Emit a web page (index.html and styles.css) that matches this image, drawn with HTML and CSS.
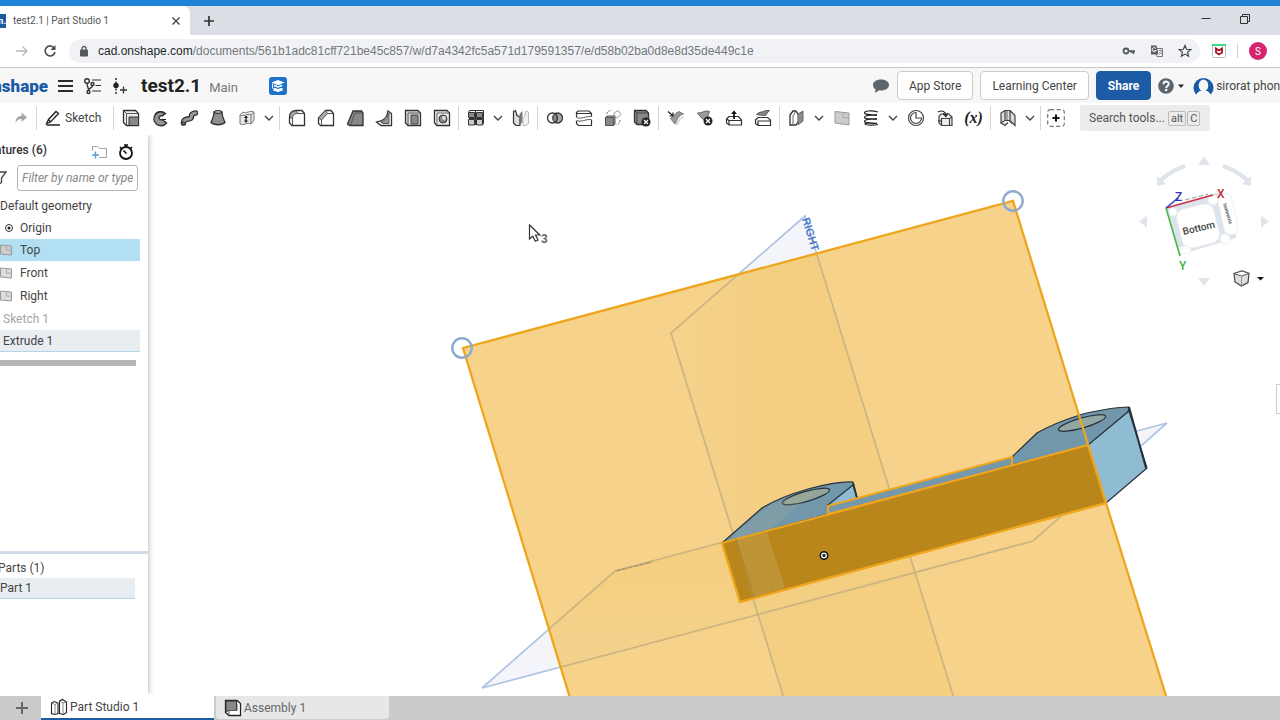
FILE: index.html
```html
<!DOCTYPE html>
<html lang="en">
<head>
<meta charset="utf-8">
<title>test2.1 | Part Studio 1</title>
<link rel="stylesheet" href="styles.css">
</head>
<body>
<div class="app">
  <div class="tabstrip">
    <div class="tab">
      <span class="favicon">n.</span>
      <span class="tab-title">test2.1 | Part Studio 1</span>
      <button class="plain" aria-label="Close tab"><svg width="10" height="10" viewBox="0 0 10 10"><path d="M1.5 1.5l7 7M8.500 1.500l-7 7" stroke="#444" stroke-width="1.400"/></svg></button>
    </div>
    <button class="plain newtab" aria-label="New tab"><svg width="12" height="12" viewBox="0 0 12 12"><path d="M6 1v10M1 6h10" stroke="#333" stroke-width="1.700"/></svg></button>
    <div class="window-controls">
      <button class="plain" aria-label="Minimize"><svg width="12" height="12" viewBox="0 0 12 12"><path d="M1.500 5.500h9" stroke="#333"/></svg></button>
      <button class="plain" aria-label="Restore"><svg width="12" height="12" viewBox="0 0 12 12"><path d="M1.500 3.500h7v7h-7zM3.500 3.500v-2h7v7h-2" fill="none" stroke="#333"/></svg></button>
    </div>
  </div>

  <div class="urlrow">
    <button class="plain" aria-label="Forward"><svg width="14" height="12" viewBox="0 0 14 12"><path d="M1 6h11M7.500 1.500L12 6l-4.500 4.500" fill="none" stroke="#b4b6b9" stroke-width="1.300"/></svg></button>
    <button class="plain" aria-label="Reload"><svg width="14" height="14" viewBox="0 0 14 14"><path d="M11.500 4.500A5 5 0 1 0 12 8" fill="none" stroke="#4a4c50" stroke-width="1.600"/><path d="M12.500 1v5h-5z" fill="#4a4c50"/></svg></button>
    <div class="omnibox">
      <svg width="10" height="12" viewBox="0 0 10 12"><rect x="1" y="4.500" width="8" height="7" rx="1" fill="#55585c"/><path d="M3 5V3.500a2 2 0 0 1 4 0V5" fill="none" stroke="#55585c" stroke-width="1.300"/></svg>
      <span class="url"><b>cad.onshape.com</b>/documents/561b1adc81cff721be45c857/w/d7a4342fc5a571d179591357/e/d58b02ba0d8e8d35de449c1e</span>
      <span class="url-icons">
        <svg width="14" height="14" viewBox="0 0 14 14"><circle cx="4" cy="7" r="2.500" fill="none" stroke="#55585c" stroke-width="1.800"/><path d="M6.500 7H13M11.500 7v3M9.500 7v2" stroke="#55585c" stroke-width="1.700"/></svg>
        <svg width="14" height="14" viewBox="0 0 14 14"><path d="M5.500 4.500h7v8H7z" fill="#fff" stroke="#777"/><path d="M1 1.500h5.500l2 9H1z" fill="#5b5e62"/><path d="M5.800 4.500a2 2 0 1 0 .2 2H4.300" fill="none" stroke="#fff"/><path d="M8.500 6.500h4M10.500 5.500v1M12 6.500c-.5 2-1.500 3-3 4M9.300 7.500c.5 1.500 1.500 2.500 3 3.200" fill="none" stroke="#777" stroke-width=".8"/></svg>
        <svg width="14" height="14" viewBox="0 0 14 14"><path d="M7 1.500l1.600 3.800 4.100.3-3.100 2.700 1 4L7 10.100l-3.600 2.200 1-4L1.300 5.600l4.100-.3z" fill="none" stroke="#44474b" stroke-width="1.200"/></svg>
      </span>
    </div>
    <svg class="shield" width="14" height="14" viewBox="0 0 14 14"><rect x=".5" y=".5" width="13" height="13" rx="1" fill="#fff" stroke="#b9bdb9"/><path d="M0 0h14v2H0z" fill="#3ddc84"/><path d="M4 4.500v4L7 10.500l3-2v-4L7 6.500z" fill="none" stroke="#a3151f" stroke-width="1.800"/></svg>
    <span class="divider"></span>
    <button class="avatar" aria-label="Profile">S</button>
  </div>

  <header class="dochead">
    <div class="logo"><span>onshape</span></div>
    <button class="plain" aria-label="Menu"><svg width="16" height="14" viewBox="0 0 16 14"><path d="M0 2h15M0 7h15M0 12h15" stroke="#2b2d2f" stroke-width="2.200"/></svg></button>
    <button class="plain" aria-label="Versions"><svg width="20" height="18" viewBox="0 0 20 18"><g fill="none" stroke="#333" stroke-width="1.400"><circle cx="4" cy="4" r="2.300"/><circle cx="9.500" cy="7" r="1.500"/><circle cx="5.500" cy="15" r="1.500"/><path d="M4 6.300c0 3.500 1.500 4 1.500 7M9.500 8.500c0 2.500-3.500 2.500-4 4.500"/><path d="M9 3h9M12.500 8.500H18M9 14h9" stroke-width="1.200"/></g></svg></button>
    <button class="plain" aria-label="Create version"><svg width="16" height="18" viewBox="0 0 16 18"><path d="M4 1v16" stroke="#333" stroke-width="1.500" stroke-dasharray="2 1.500"/><circle cx="4" cy="8.500" r="2.700" fill="#222"/><path d="M11.500 9.500v7M8 13h7" stroke="#333" stroke-width="1.300"/></svg></button>
    <h1>test2.1</h1>
    <span class="branch">Main</span>
    <button class="plain edu" aria-label="Education"><svg width="18" height="18" viewBox="0 0 18 18"><rect width="18" height="18" rx="3" fill="#1f72c9"/><path d="M9 3l6.500 2.600L9 8.300 2.500 5.600z" fill="#fff"/><path d="M5 7.600l4 1.700 4-1.700v2.200c-1.600 0-3 .4-4 1.200-1-.8-2.400-1.200-4-1.200zM4.500 11c2 0 3.500.4 4.500 1.300 1-.9 2.500-1.300 4.500-1.300v3c-2 0-3.500.3-4.500 1.200-1-.9-2.500-1.200-4.500-1.200zM3 6.500h1v5H3z" fill="#fff"/></svg></button>
    <div class="head-right">
      <button class="plain" aria-label="Comments"><svg width="18" height="16" viewBox="0 0 18 16"><path d="M9 1.500c4.800 0 8 2.400 8 5.500s-3.200 5.500-8 5.500c-.7 0-1.400 0-2-.2C5.500 14 4 14.700 2.300 14.800c.9-1 1.200-2 1.200-3.400C1.800 10.300 1 8.800 1 7c0-3.100 3.200-5.500 8-5.500z" fill="#5d666e"/></svg></button>
      <button class="btn">App Store</button>
      <button class="btn">Learning Center</button>
      <button class="btn share">Share</button>
      <button class="plain help" aria-label="Help"><svg width="27" height="16" viewBox="0 0 27 16"><circle cx="8" cy="8" r="7.800" fill="#5d666e"/><path d="M5.500 6.300c0-3.700 5.200-3.500 5.200-.4 0 2-2.500 2-2.500 4" fill="none" stroke="#fff" stroke-width="1.900"/><circle cx="8.200" cy="12" r="1.200" fill="#fff"/><path d="M20 6.500h6l-3 3.500z" fill="#222"/></svg></button>
      <button class="plain user"><svg width="21" height="20" viewBox="0 0 21 20"><path d="M3 18.500A10 10 0 1 1 18 18.500L14.500 15h-8z" fill="#175aa6"/><ellipse cx="10.500" cy="9.500" rx="4.800" ry="6" fill="#f7f7f7"/><path d="M3.500 20c.5-3 2.500-4.500 5-5h4c2.500.5 4.500 2 5 5z" fill="#f7f7f7"/></svg>sirorat phon</button>
    </div>
  </header>

  <nav class="toolbar">
    <button class="tool redo" aria-label="Redo"><svg class="i" viewBox="0 0 18 18"><path d="M3.500 14.500c0-5 2-7.500 6-7.500V3.500L15 8.500l-5.500 4.300V10c-3 0-4.500 1-6 4.500z" fill="#a4a4a4"/></svg></button>
    <div class="group">
      <button class="sketch"><svg class="i" viewBox="0 0 18 18"><path d="M2.500 14.500l2-4L12 2.500l2.500 2-8 8.500zM4.500 10.500l2 2.500M2.500 16H16" fill="none" stroke="#222" stroke-width="1.300"/></svg>Sketch</button>
    </div>
    <div class="group">
      <button class="tool" aria-label="Extrude"><svg class="i" viewBox="0 0 18 18"><path d="M1.500 1.500h12l3 3v12h-12l-3-3z" fill="#eee" stroke="#333" stroke-width="1.300"/><path d="M4.500 16V4.500H16M1.500 1.500l3 3" fill="none" stroke="#555"/><path d="M7 8h9.500v8.500H7z" fill="#888" stroke="#333"/></svg></button>
      <button class="tool" aria-label="Revolve"><svg class="i" viewBox="0 0 18 18"><path d="M14.500 4.500A7 7 0 1 0 15.500 14l-4.500-3.500a2 2 0 1 1 0-3.500z" fill="#949494" stroke="#333" stroke-width="1.400"/><path d="M4 5c2-2.500 6-3 9-1M11 7l3.500-2.500M11 10.500h4" fill="none" stroke="#222"/></svg></button>
      <button class="tool" aria-label="Sweep"><svg class="i" viewBox="0 0 18 18"><path d="M3.500 14c.5-7 8.500-1.500 8-7 0-1.500 1-2.500 4-3" fill="none" stroke="#333" stroke-width="5.600" stroke-linecap="round"/><path d="M3.500 14c.5-7 8.500-1.500 8-7 0-1.500 1-2.500 4-3" fill="none" stroke="#999" stroke-width="3" stroke-linecap="round"/><ellipse cx="3.500" cy="14.500" rx="2" ry="1.300" fill="#777" stroke="#222"/></svg></button>
      <button class="tool" aria-label="Loft"><svg class="i" viewBox="0 0 18 18"><path d="M5 3c0 5-1.500 7-3 10.500 3 3 11 3 14 0C14.500 10 13 8 13 3z" fill="#8f8f8f" stroke="#333" stroke-width="1.300"/><ellipse cx="9" cy="3" rx="4" ry="1.400" fill="#bbb" stroke="#222"/></svg></button>
      <button class="tool" aria-label="Thicken"><svg class="i" viewBox="0 0 18 18"><path d="M2 6l3-3c3 2 7-2 11 0v8l-3 4c-4-2-7 2-11 0z" fill="#e6e6e6" stroke="#777"/><path d="M2 6c4 2 7-2 11 0v9M13 6l3-3" fill="none" stroke="#777"/><path d="M8 7v6" stroke="#222" stroke-width="1.300"/><path d="M6 9l2-2.500L10 9zM6 11.500l2 2.500 2-2.500z" fill="#222"/></svg></button>
      <button class="drop" aria-label="More solid tools"><svg class="c" viewBox="0 0 10 10"><path d="M1 3l4 4 4-4"/></svg></button>
    </div>
    <div class="group">
      <button class="tool" aria-label="Fillet"><svg class="i" viewBox="0 0 18 18"><path d="M1.500 14V8c0-4 2.500-6.500 6.500-6.500h6l2.500 3v12H4z" fill="#fff" stroke="#333" stroke-width="1.300"/><path d="M2 8c0-4 2.500-6 6-6l2 2.500c-4 0-5.500 2-5.500 5.500z" fill="#aaa" stroke="#555"/><path d="M4.500 16v-6M10 4.500h6" stroke="#555"/></svg></button>
      <button class="tool" aria-label="Chamfer"><svg class="i" viewBox="0 0 18 18"><path d="M1.500 9l7-7.500H14l2.500 3v12h-13l-2-2z" fill="#fff" stroke="#333" stroke-width="1.300"/><path d="M1.500 9l7-7.500 2 3-6 6.500z" fill="#aaa" stroke="#555"/><path d="M4.500 16v-5M10.500 4.500h6" stroke="#555"/></svg></button>
      <button class="tool" aria-label="Draft"><svg class="i" viewBox="0 0 18 18"><path d="M1.500 15L7 2h8.500l1.500 2v12.500H3.500z" fill="#888" stroke="#333" stroke-width="1.300"/><path d="M4.500 16.500L9 4h7" fill="none" stroke="#555"/></svg></button>
      <button class="tool" aria-label="Rib"><svg class="i" viewBox="0 0 18 18"><path d="M13 2l3.500 2.500v12H6L1.500 13l5-1.500c4-1.500 6-5 6.500-9.500z" fill="#fff" stroke="#333" stroke-width="1.300"/><path d="M5.500 13C11 11.500 13 8 14 4v10.500H8z" fill="#999" stroke="#555"/></svg></button>
      <button class="tool" aria-label="Shell"><svg class="i" viewBox="0 0 18 18"><path d="M1.500 1.500H14l2.500 2.500v12.500H4L1.500 14z" fill="#ddd" stroke="#333" stroke-width="1.300"/><path d="M4 16V4h12" fill="none" stroke="#555"/><path d="M7 6h7v9H7z" fill="#888" stroke="#444"/></svg></button>
      <button class="tool" aria-label="Hole"><svg class="i" viewBox="0 0 18 18"><path d="M1.500 1.500H14l2.500 2.500v12.500H4L1.500 14z" fill="#eee" stroke="#333" stroke-width="1.300"/><path d="M4 16V4h12" fill="none" stroke="#666"/><circle cx="10" cy="10" r="4" fill="#888" stroke="#333"/><circle cx="11" cy="9" r="2" fill="#ddd"/></svg></button>
    </div>
    <div class="group">
      <button class="tool" aria-label="Pattern"><svg class="i" viewBox="0 0 18 18"><g fill="#8b8b8b" stroke="#333"><path d="M1.500 3.500h6v5h-6zM9.500 3.500h6v5h-6z"/><path d="M1.500 10.500h6v5.500h-6zM9.500 10.500h6v5.500h-6z" fill="#ccc"/><path d="M1.500 3.500l1-2h14v13L15.500 16M8.500 2v14M2 9.500h14.500" fill="none"/></g></svg></button>
      <button class="drop" aria-label="More patterns"><svg class="c" viewBox="0 0 10 10"><path d="M1 3l4 4 4-4"/></svg></button>
      <button class="tool" aria-label="Mirror"><svg class="i" viewBox="0 0 18 18"><path d="M1.500 2.500l2-1 1.500 5L8 8v8.500H4L1.500 14z" fill="#ddd" stroke="#333" stroke-width="1.200"/><path d="M7.500 5l3-3v11l-3 3.500z" fill="#777"/><path d="M11 9l2-2 1-5 2.500 1v11.500L14 16.500h-3z" fill="#f2f2f2" stroke="#bbb"/></svg></button>
    </div>
    <div class="group">
      <button class="tool" aria-label="Boolean"><svg class="i" viewBox="0 0 18 18"><circle cx="11.500" cy="9" r="5" fill="#aaa" stroke="#333" stroke-width="1.300"/><circle cx="6.500" cy="9" r="5" fill="#fff" fill-opacity=".6" stroke="#333" stroke-width="1.300"/><path d="M9 4.800a5 5 0 0 1 0 8.400 5 5 0 0 1 0-8.400z" fill="#888" stroke="#333"/></svg></button>
      <button class="tool" aria-label="Split"><svg class="i" viewBox="0 0 18 18"><path d="M1.500 8V3.500L3 2h11l2.500 2.500v3M1.500 12v2.500l2 2h13V11M2 4.500h14" fill="none" stroke="#333" stroke-width="1.200"/><path d="M1.500 8.500c5 2 9-1.500 15-1M1.500 11.500c5 2 9-1.500 15-1" fill="none" stroke="#555"/></svg></button>
      <button class="tool" aria-label="Transform"><svg class="i" viewBox="0 0 18 18"><path d="M1.500 8.500h8v8h-8z" fill="#888" stroke="#555"/><path d="M1.500 8.500L3 7h8v8l-1.500 1.500v-8z" fill="#aaa" stroke="#555"/><path d="M10 4l4-2.500 3 4-3.500 3.500L10 6z" fill="#fff" stroke="#999"/><path d="M3 5c0-2.500 2-3.500 4.500-3.500M16 11c0 3-1.500 4.500-3.500 5" fill="none" stroke="#777" stroke-dasharray="2 1"/></svg></button>
      <button class="tool" aria-label="Delete part"><svg class="i" viewBox="0 0 18 18"><path d="M1.500 1.500H13L15.500 4v11.500H4L1.500 13z" fill="#8a8a8a" stroke="#333" stroke-width="1.300"/><path d="M4 15V4h11M1.500 1.500L4 4" fill="none" stroke="#444"/><circle cx="13" cy="13" r="4.500" fill="#222"/><path d="M11 11l4 4M15 11l-4 4" stroke="#fff" stroke-width="1.300"/></svg></button>
    </div>
    <div class="group">
      <button class="tool" aria-label="Offset surface"><svg class="i" viewBox="0 0 18 18"><path d="M8 15.500c2-5 4-7 8.500-8.500L17 9c-3 1-4.500 3-6 7.500z" fill="#ddd"/><path d="M3.500 9.500C6 8.500 8 4 12 2.500L16.500 5c-5 1.500-6.500 5-8.500 10z" fill="#999" stroke="#777"/><path d="M1 2.500l5 4.500M6 3.500V7H2.500" fill="none" stroke="#222" stroke-width="1.200"/></svg></button>
      <button class="tool" aria-label="Delete face"><svg class="i" viewBox="0 0 18 18"><path d="M1.500 4c5 0 7-3 12-1.500L10 12 5.500 9z" fill="#999" stroke="#666"/><circle cx="12" cy="12" r="4.500" fill="#222"/><path d="M10 10l4 4M14 10l-4 4" stroke="#fff" stroke-width="1.300"/></svg></button>
      <button class="tool" aria-label="Move face"><svg class="i" viewBox="0 0 18 18"><path d="M1.500 10L4 7.500h9.500L16.500 11v5H4l-2.500-2zM4 16v-4.500h12M1.500 10L4 11.500" fill="#fff" stroke="#333" stroke-width="1.200"/><path d="M9 10V3.500" stroke="#111" stroke-width="1.700"/><path d="M6 5L9 1.500 12 5z" fill="#111"/></svg></button>
      <button class="tool" aria-label="Replace face"><svg class="i" viewBox="0 0 18 18"><path d="M1.500 11L4 8.500h9.500l3 2.500v5.500H4l-2.500-2zM4 16v-4h12" fill="#fff" stroke="#333" stroke-width="1.200"/><path d="M2.500 5.500C6 2 8 4 11.500 1.500h4c-3 2-2 3-4 5-4 0-6-.500-9-1z" fill="#888" stroke="#555"/></svg></button>
    </div>
    <div class="group">
      <button class="tool" aria-label="Modify fillet"><svg class="i" viewBox="0 0 18 18"><path d="M2 6l3-4h3l2.500 4v6L8 16H2z" fill="#fff" stroke="#333" stroke-width="1.300"/><path d="M5 15.500V7l3-5" fill="none" stroke="#666"/><path d="M10 5l5-3v10l-5 4z" fill="#8c8c8c" stroke="#666"/></svg></button>
      <button class="drop" aria-label="More surface tools"><svg class="c" viewBox="0 0 10 10"><path d="M1 3l4 4 4-4"/></svg></button>
      <button class="tool" aria-label="Plane"><svg class="i" viewBox="0 0 18 18"><path d="M2 2.500l14 1.500v12L2 14z" fill="#ccc" stroke="#999"/><path d="M10 3.500v5l6 .5" fill="none" stroke="#aaa"/></svg></button>
      <button class="tool" aria-label="Helix"><svg class="i" viewBox="0 0 18 18"><path d="M16 3C9 1 2 2 2.500 4S13 6 15 5.500M15 6.500C9 5.500 2 6.500 2.500 8.500S13 10 15 9.500M15 10.500c-6-1-13 0-12.500 2s10.500 2 12.500 1.500M15 14.500c-6-1-12-1-12 .5 1 1.500 9 1.500 13 .5" fill="none" stroke="#222" stroke-width="1.200"/></svg></button>
      <button class="drop" aria-label="More curves"><svg class="c" viewBox="0 0 10 10"><path d="M1 3l4 4 4-4"/></svg></button>
      <button class="tool" aria-label="Measure"><svg class="i" viewBox="0 0 18 18"><circle cx="9" cy="9" r="7.500" fill="#fff" stroke="#444" stroke-width="1.200"/><path d="M9 3.500a5.500 5.500 0 1 0 5.500 5.500H9z" fill="#fff" stroke="#444" stroke-width="1.200"/></svg></button>
      <button class="tool" aria-label="Derived"><svg class="i" viewBox="0 0 18 18"><path d="M3 9V7l2-2h8l3 3v8.500H5.500L3 14zM5.500 16V9.500h8M13.500 16V9.500L16 8" fill="#eee" stroke="#444" stroke-width="1.200"/><path d="M2 3c4-2 7-1 8 3M7 4.500l3 3 2-3.500M2 12h4" fill="none" stroke="#222" stroke-width="1.200"/></svg></button>
      <button class="tool variable" aria-label="Variable">(x)</button>
    </div>
    <div class="group">
      <button class="tool" aria-label="Sheet metal"><svg class="i" viewBox="0 0 18 18"><path d="M2 4l4-2.500v10L2 14zM6 1.500h5v10H6M11 1.500l5 5v10l-5-5M2 14l4 2.500 3-3" fill="#ddd" stroke="#444" stroke-width="1.200"/><path d="M8 2v9M10 12l3 3" stroke="#666"/></svg></button>
      <button class="drop" aria-label="More sheet metal tools"><svg class="c" viewBox="0 0 10 10"><path d="M1 3l4 4 4-4"/></svg></button>
    </div>
    <div class="group last">
      <button class="tool" aria-label="Add custom features"><svg class="i" viewBox="0 0 18 18"><rect x=".7" y=".7" width="16.600" height="16.600" rx="2.500" fill="none" stroke="#777" stroke-width="1.200" stroke-dasharray="4 2.500"/><path d="M9 5.500v7M5.500 9h7" stroke="#111" stroke-width="2"/></svg></button>
    </div>
    <button class="search">Search tools... <kbd>alt</kbd><kbd>C</kbd></button>
  </nav>

  <main class="work">
    <svg class="scene" viewBox="0 135 1280 561" preserveAspectRatio="xMidYMid slice" role="img" aria-label="Bracket model with the Top plane selected">
      <defs>
        <clipPath id="plane"><path d="M463 348L1013 201 1186 760H589z"/></clipPath>
        <linearGradient id="vertical" x1="0" x2="1"><stop offset="0" stop-color="#f0d290" stop-opacity=".3"/><stop offset=".3" stop-color="#efcb7c" stop-opacity=".7"/><stop offset="1" stop-color="#f6ce7c"/></linearGradient>
        <linearGradient id="across" x1="0" y1="0" x2="0" y2="1"><stop offset="0" stop-color="#f5cd78"/><stop offset="1" stop-color="#efd393"/></linearGradient>
      </defs>
      <g fill="#f3f5fa" stroke="#b0c4e2" stroke-width="1.700">
        <path d="M805 216L671 333 803 760H973z"/>
        <path d="M482 688L615 571 1167 423 1033 541z"/>
      </g>
      <path d="M463 348L1013 201 1186 760H589z" fill="#f7d28a"/>
      <g clip-path="url(#plane)">
        <path d="M805 216L671 333 803 760H973z" fill="url(#vertical)" fill-opacity=".7"/>
        <path d="M482 688L615 571 735 539 900 576z" fill="url(#across)" fill-opacity=".7"/>
        <path d="M805 216L671 333 803 760H973zM482 688L615 571 1167 423 1033 541z" fill="none" stroke="#cab581" stroke-width="1.700"/>
        <path d="M616 571l36-9" stroke="#aa996e" stroke-width="1.500" stroke-dasharray="5 1"/>
      </g>
      <text class="plane-label" transform="translate(802 219) rotate(73)">RIGHT</text>

      <g stroke="#26333a" stroke-width="1.200" stroke-linejoin="round">
        <path d="M722 543L762 508Q780 497 808 489 838 481 853 482L857 500 828 514z" fill="#7397aa"/>
        <path d="M828 505L853 485 857 498 828 507z" fill="#8dbbd4"/>
        <path d="M853 483l4 15" fill="none" stroke-width="1.800"/>
        <ellipse cx="806" cy="496.500" rx="24.500" ry="5" transform="rotate(-16 806 496.500)" fill="#93a39c"/>
        <path d="M1012 465V457L1037 433Q1054 423 1083 414 1113 407 1129 407L1128 412 1088 446z" fill="#7397aa"/>
        <path d="M1088 445L1129 411 1147 468 1106 503z" fill="#90bcd3"/>
        <path d="M1129 407L1146 468" stroke-width="2"/>
        <ellipse cx="1082" cy="423" rx="24.500" ry="5" transform="rotate(-16 1082 423)" fill="#91a8a4"/>
      </g>
      <path d="M733 540L737 532 766 508Q790 495 820 489L797 507 771 529z" fill="#b5b697" fill-opacity=".2"/>
      <g stroke="#f1a51c" stroke-width="2" stroke-linejoin="round">
        <path d="M828 506L1012 457V466L828 514z" fill="#7598aa"/>
        <path d="M722 543L1088 445 1106 503 740 602z" fill="#b9861c"/>
      </g>
      <path d="M736 540L767 532 785 588 752 597z" fill="#c4a04c" fill-opacity=".55"/>
      <path d="M736 539l18 59" stroke="#a88530" stroke-width="1.300"/>
      <path d="M722 543L740 602 1106 503" fill="none" stroke="#f1a51c" stroke-width="2"/>
      <path d="M589 760L463 348 1013 201 1106 503 1186 760" fill="none" stroke="#eda61e" stroke-width="2.300"/>
      <g fill="none" stroke="#8eabcf" stroke-width="2.400"><circle cx="462" cy="348" r="9.700"/><circle cx="1013" cy="201" r="9.700"/></g>
      <circle cx="824" cy="555.500" r="3.500" fill="#222" stroke="#111" stroke-width="2"/><circle cx="824" cy="555.500" r="2.300" fill="none" stroke="#fff" stroke-width="1.300"/>
      <path d="M529.500 225v14l3.300-2.800 2.500 5 2.700-1.200-2.500-5h4.300z" fill="#fff" stroke="#333" stroke-width="1.200"/>
      <text class="cursor-count" x="541" y="243">3</text>
    </svg>

    <aside class="panel">
      <section class="features">
        <div class="panel-head"><h2>Features (6)</h2>
          <button class="plain" aria-label="Add folder"><svg width="17" height="14" viewBox="0 0 17 14"><path d="M1.500 6V1.500h5l2 2h7v9H8" fill="none" stroke="#a0a4a8"/><path d="M4.500 6.500v7M1 10h7" stroke="#5b9bd0" stroke-width="1.500"/></svg></button>
          <button class="plain" aria-label="Rollback timer"><svg width="16" height="16" viewBox="0 0 16 16"><circle cx="8" cy="9" r="6" fill="#fff" stroke="#111" stroke-width="1.800"/><path d="M6 1h4M8 1v2M2 3l1.500 1.500M14 3l-1.500 1.500M5.500 6.500l3 3" stroke="#111" stroke-width="1.700"/></svg></button>
        </div>
        <div class="filter">
          <svg width="14" height="16" viewBox="0 0 14 16"><path d="M1 2h12L8.500 8v4.500l-3 2V8z" fill="none" stroke="#444" stroke-width="1.300"/></svg>
          <input type="text" placeholder="Filter by name or type" aria-label="Filter by name or type">
        </div>
        <ul class="tree">
          <li>Default geometry</li>
          <li class="origin"><svg class="g" viewBox="0 0 12 12"><circle cx="6" cy="6" r="3.500" fill="#fff" stroke="#333"/><circle cx="6" cy="6" r="1.500" fill="#222"/></svg>Origin</li>
          <li class="plane selected"><svg class="g" viewBox="0 0 12 12"><path d="M.5 1l11 1v9L.5 10z" fill="#ccc" stroke="#999"/><path d="M6.500 1.500v4.500l5 .3" fill="none" stroke="#aaa"/></svg>Top</li>
          <li class="plane"><svg class="g" viewBox="0 0 12 12"><path d="M.5 1l11 1v9L.5 10z" fill="#ddd" stroke="#999"/><path d="M6.500 1.500v4.500l5 .3" fill="none" stroke="#aaa"/></svg>Front</li>
          <li class="plane"><svg class="g" viewBox="0 0 12 12"><path d="M.5 1l11 1v9L.5 10z" fill="#ddd" stroke="#999"/><path d="M6.500 1.500v4.500l5 .3" fill="none" stroke="#aaa"/></svg>Right</li>
          <li class="item muted">Sketch 1</li>
          <li class="item active">Extrude 1</li>
        </ul>
        <div class="rollback"></div>
      </section>
      <section class="parts">
        <h3>Parts (1)</h3>
        <div class="part">Part 1</div>
      </section>
    </aside>

    <div class="viewcube">
      <svg width="140" height="145" viewBox="1135 150 140 145">
        <g fill="#dfe5eb"><path d="M1204 156l6 9h-12zM1204 286l6-8h-12zM1139 221.500l8-6v12zM1269 221.500l-8-6v12z"/><path d="M1157 186v-10l9 8z"/><path d="M1251 186v-10l-9 8z"/></g>
        <g fill="none" stroke="#dfe5eb" stroke-width="4.500"><path d="M1161 180q10-9 24-14M1247 180q-10-9-24-14"/></g>
        <path d="M1166 208l52-16 14 8 4 38-57 17z" fill="#dde3ea"/>
        <g fill="#fff" stroke="#eceff3"><rect x="-19" y="-20" width="38" height="40" rx="9" transform="translate(1198 226) rotate(-14)"/><rect x="-7" y="-21" width="14" height="42" rx="7" transform="translate(1228 214) rotate(-12)"/><circle cx="1173" cy="212" r="4"/><circle cx="1213" cy="200" r="5"/><circle cx="1225" cy="239" r="5"/><ellipse cx="1185" cy="250" rx="6" ry="4"/></g>
        <path d="M1185 200l23-6" stroke="#999" stroke-dasharray="5 2"/>
        <path d="M1166 208l47-13" stroke="#cb3344" stroke-width="1.600"/><path d="M1166 208l14 48" stroke="#45b94a" stroke-width="1.600"/><path d="M1166 208l12-10" stroke="#3838b8" stroke-width="1.600"/>
        <text class="face" transform="translate(1183.500 235) rotate(-13)">Bottom</text>
        <text class="side-face" transform="translate(1223 204) rotate(73)">Isometric</text>
        <text class="axis axis-z" x="1175" y="201">Z</text><text class="axis axis-x" x="1217" y="198">X</text><text class="axis axis-y" x="1179" y="270">Y</text>
      </svg>
      <button class="plain view-menu" aria-label="View options"><svg width="31" height="17" viewBox="0 0 31 17"><path d="M1 3.500l8-2.500 7 2.500-1 9-6.500 3.500L2 12z" fill="#ddd" stroke="#444" stroke-width="1.200"/><path d="M1 3.500L8.500 6 16 3.500 9 1z" fill="#fff" stroke="#555"/><path d="M8.500 6v10" stroke="#999"/><path d="M24 7h7l-3.500 3.500z" fill="#111"/></svg></button>
    </div>
    <button class="edge-handle" aria-label="Open side panel"></button>
  </main>

  <footer class="doctabs">
    <button class="plain add" aria-label="Insert tab"><svg width="14" height="14" viewBox="0 0 14 14"><path d="M7 1v12M1 7h12" stroke="#666" stroke-width="2"/></svg></button>
    <button class="doctab current"><svg class="i" viewBox="0 0 18 18"><path d="M1.500 5l3-1.500L8 5v10.500L5 16.500l-3.500-1zM9.500 3l3-1.500 4 2.500v10.500l-3 2-4-1z" fill="#fff" stroke="#222" stroke-width="1.100"/><path d="M1.500 5L5 6.500 8 5M5 6.500v10M9.500 3l3.500 2 3.500-1M13 5v11" fill="none" stroke="#888"/></svg>Part Studio 1</button>
    <button class="doctab"><svg class="i" viewBox="0 0 18 18"><path d="M1.500 1.500H13l3.500 3v12H5l-3.500-3z" fill="#fff" stroke="#222" stroke-width="1.300"/><path d="M2 2h10.500v9.500H4.500L2 13z" fill="#888" stroke="#333"/><path d="M5 16v-4.500h8V5" fill="none" stroke="#555"/></svg>Assembly 1</button>
  </footer>
</div>
</body>
</html>
```
FILE: styles.css
```css
* { box-sizing: border-box; }
body { margin: 0; overflow: hidden; font-family: Roboto, "Liberation Sans", sans-serif; font-size: 12px; color: #444; background: #fff; }
button { font: inherit; color: inherit; margin: 0; padding: 0; border: 0; background: none; white-space: nowrap; }
svg { display: block; flex: none; }
h1, h2, h3, ul { margin: 0; padding: 0; }
.app { display: flex; flex-direction: column; height: 100vh; border-top: 6px solid #1e83d6; }
.plain { display: flex; align-items: center; }

.tabstrip { display: flex; align-items: center; flex: none; height: 29px; background: #dbdee4; }
.tab { display: flex; align-items: center; gap: 7px; width: 190px; height: 29px; padding-right: 9px; background: #fff; border-radius: 0 7px 0 0; }
.favicon { display: flex; justify-content: flex-end; width: 6px; height: 14px; overflow: hidden; background: #1a5ba6; color: #fff; font-size: 9px; font-weight: 700; line-height: 14px; }
.tab-title { flex: 1; font-size: 10px; color: #555; white-space: nowrap; }
.newtab { margin-left: 13px; }
.window-controls { display: flex; gap: 27px; margin-left: auto; padding: 0 29px 3px 0; }

.urlrow { display: flex; align-items: center; flex: none; height: 33px; padding: 0 13px 0 15px; border-bottom: 1px solid #c4c6c8; }
.urlrow > .plain { margin-right: 14px; }
.omnibox { display: flex; align-items: center; flex: 1; gap: 9px; height: 24px; margin-left: -2px; padding: 0 8px 0 10px; border-radius: 12px; background: #f0f2f5; }
.url { flex: 1; font-family: "Liberation Sans", Arial, sans-serif; font-size: 12px; color: #74777b; white-space: nowrap; }
.url b { font-weight: 400; color: #26282b; }
.url-icons { display: flex; gap: 14px; }
.shield { margin-left: 12px; }
.divider { width: 1px; height: 14px; margin: 0 11px; background: #d0d2d5; }
.avatar { width: 18px; height: 18px; border-radius: 50%; background: #d6246e; color: #fff; font-size: 10px; }

.dochead { display: flex; align-items: center; flex: none; height: 35px; background: #f7f7f7; }
.logo { display: flex; justify-content: flex-end; width: 48px; margin-right: 10px; overflow: hidden; color: #1b5ba5; font: 900 17px Roboto, sans-serif; line-height: 28px; }
.dochead > .plain { margin-right: 9px; }
.dochead h1 { margin-left: 4px; font-size: 19px; font-weight: 700; color: #222; }
.branch { margin: 4px 31px 0 8px; font-size: 13px; color: #777; }
.head-right { display: flex; align-items: center; gap: 7px; width: 408px; margin-left: auto; overflow: hidden; }
.btn { height: 29px; padding: 0 11px; border: 1px solid #ccc; border-radius: 4px; background: #fff; }
.share { border-color: #1c5ca6; background: #1c5ca6; color: #fff; font-weight: 700; }
.user { gap: 2px; margin-left: 1px; }

.toolbar { display: flex; align-items: center; flex: none; height: 32px; padding: 0 0 2px 5px; }
.i { width: 18px; height: 18px; }
.group { display: flex; align-items: center; height: 24px; padding: 0 2px; border-left: 1px solid #d5d5d5; }
.last { padding: 0; }
.tool { display: flex; align-items: center; justify-content: center; width: 29px; height: 24px; }
.redo { width: 31px; }
.sketch { display: flex; align-items: center; gap: 3px; width: 72px; padding-left: 5px; }
.drop { display: flex; justify-content: center; width: 16px; }
.c { width: 10px; height: 10px; fill: none; stroke: #444; stroke-width: 1.4; }
.variable { font: italic 700 16px "Liberation Serif", serif; color: #222; }
.search { width: 130px; height: 26px; margin-left: 10px; background: #ececec; color: #555; text-align: left; padding-left: 9px; border-radius: 2px; }
.search kbd { display: inline-block; padding: 0 2px; margin-right: 1px; border: 1px solid #bbb; border-radius: 2px; font: 11px Roboto, sans-serif; }

.work { position: relative; display: flex; flex: 1; min-height: 0; }
.scene { position: absolute; inset: 0; width: 100%; height: 100%; }
.plane-label { font: 700 11px "Liberation Sans", sans-serif; fill: #4b78c4; }
.cursor-count { font: 700 12px "Liberation Sans", sans-serif; fill: #666; }

.panel { position: relative; display: flex; flex-direction: column; width: 148px; margin-bottom: 2px; background: #fff; box-shadow: 1px 0 5px #bbb; clip-path: inset(0 -8px 0 0); }
.features { flex: 1; border-bottom: 3px solid #d3dce6; overflow: hidden; }
.panel-head { display: flex; align-items: center; height: 30px; padding-right: 14px; }
.panel-head h2 { flex: 1; margin-left: -18px; font-size: 12px; font-weight: 500; color: #333; }
.panel-head .plain { margin-left: 10px; padding-top: 3px; }
.filter { display: flex; align-items: center; gap: 10px; margin-left: -7px; }
.filter input { width: 121px; height: 26px; padding: 0 4px; border: 1px solid #b5b5b5; border-radius: 3px; background: #fff; font: italic 12px Roboto, sans-serif; }
.filter input::placeholder { color: #888; }
.tree { width: 140px; margin-top: 4px; list-style: none; }
.tree li { display: flex; align-items: center; gap: 8px; height: 22px; }
.tree .plane { height: 23px; border-bottom: 1px solid #fff; }
.tree .selected { background: #b2dff2; }
.tree .item { padding-left: 3px; }
.tree .muted { color: #a5a5a5; }
.tree .active { background: #e8edf2; border-bottom: 1px solid #b5d6e6; }
.g { width: 12px; height: 12px; }
.tree .origin { padding-left: 3px; gap: 5px; }
.rollback { width: 136px; height: 6px; margin-top: 8px; background: #b6b6b6; }
.parts { height: 140px; padding-top: 4px; }
.parts h3 { margin-left: -2px; font-size: 12px; font-weight: 400; line-height: 20px; }
.part { width: 135px; height: 21px; line-height: 20px; background: #e8edf2; border-bottom: 1px solid #b5d6e6; }

.viewcube { position: absolute; top: 15px; right: 5px; }
.view-menu { position: absolute; right: 11px; bottom: 8px; }
.face { font: 500 10px Roboto, sans-serif; fill: #444; }
.side-face { font: 700 5px Roboto, sans-serif; fill: #555; }
.axis { font: 500 12px Roboto, sans-serif; }
.axis-x { fill: #c83040; }
.axis-y { fill: #3cb540; }
.axis-z { fill: #3434bd; }
.edge-handle { position: absolute; right: 0; top: 249px; width: 4px; height: 30px; border: 1px solid #ccc; border-right: 0; background: #fff; }

.doctabs { display: flex; flex: none; height: 24px; background: #cbcbcb; }
.add { width: 41px; padding-left: 15px; }
.doctab { display: flex; align-items: center; gap: 2px; width: 173px; height: 23px; margin-right: 2px; padding-left: 8px; background: #e7e7e7; border-radius: 0 0 4px 4px; color: #666; }
.current { height: 24px; padding-left: 9px; border-bottom: 2px solid #1c5ca6; border-radius: 0; background: #fff; color: #444; }
```
